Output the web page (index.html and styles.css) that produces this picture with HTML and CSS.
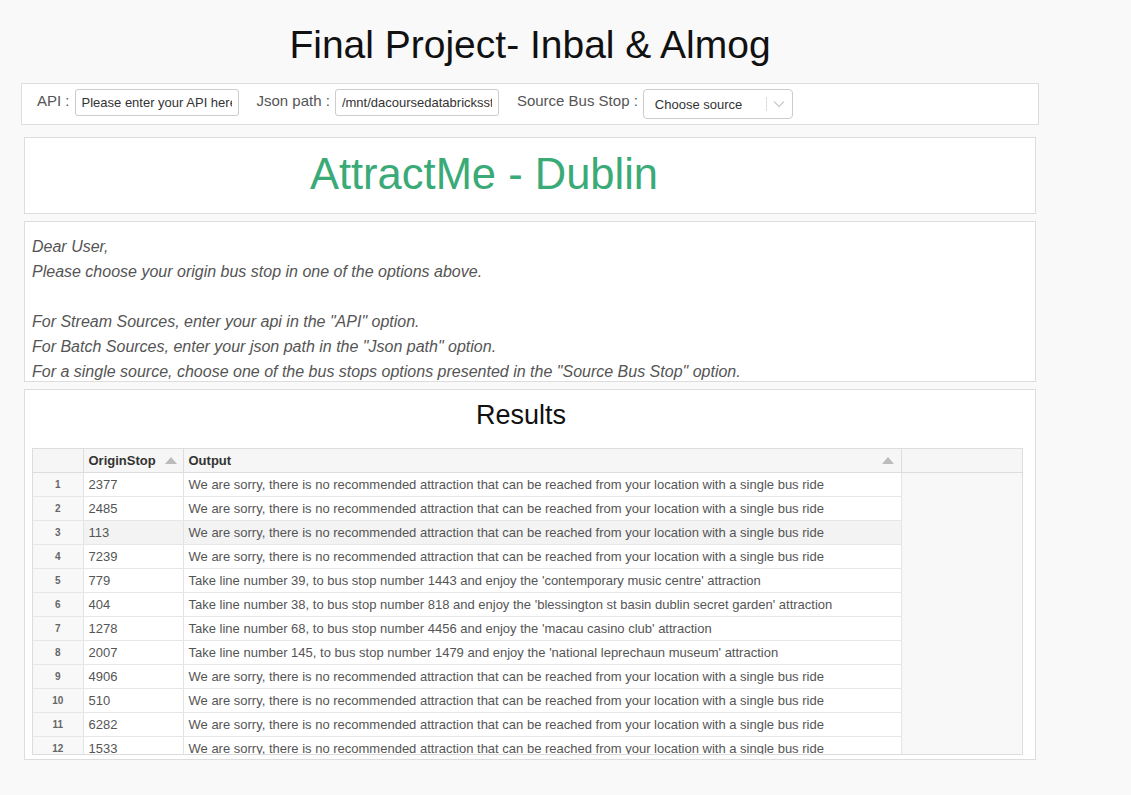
FILE: index.html
```html
<!DOCTYPE html>
<html>
<head>
<meta charset="utf-8">
<link rel="stylesheet" href="styles.css">
</head>
<body>
<div class="page">
  <h1 class="title">Final Project- Inbal &amp; Almog</h1>
  <div class="toolbar">
    <label class="field"><span class="lbl">API :</span><input class="txt" type="text" value="Please enter your API here"></label>
    <label class="field"><span class="lbl">Json path :</span><input class="txt" type="text" value="/mnt/dacoursedatabricksstorage/"></label>
    <div class="field"><span class="lbl">Source Bus Stop :</span>
      <div class="select">
        <span class="sel-text">Choose source</span>
        <span class="sel-sep"></span>
        <svg class="sel-arrow" width="12" height="8" viewBox="0 0 12 8"><path d="M1 1.5 L6 6.5 L11 1.5" fill="none" stroke="#ccc" stroke-width="1.3"/></svg>
      </div>
    </div>
  </div>
  <div class="panel brand"><div class="brand-text">AttractMe - Dublin</div></div>
  <div class="panel message">
    <p>Dear User,</p>
    <p>Please choose your origin bus stop in one of the options above.</p>
    <p>&nbsp;</p>
    <p>For Stream Sources, enter your api in the "API" option.</p>
    <p>For Batch Sources, enter your json path in the "Json path" option.</p>
    <p>For a single source, choose one of the bus stops options presented in the "Source Bus Stop" option.</p>
  </div>
  <div class="panel results">
    <h2 class="results-title">Results</h2>
    <div class="grid-wrap">
      <table class="grid">
        <thead>
          <tr>
            <th class="c-num"></th>
            <th class="c-stop"><span>OriginStop</span><span class="tri"></span></th>
            <th class="c-out"><span>Output</span><span class="tri"></span></th>
            <th class="c-fill"></th>
          </tr>
        </thead>
        <tbody>
          <tr><td class="c-num">1</td><td class="c-stop">2377</td><td class="c-out">We are sorry, there is no recommended attraction that can be reached from your location with a single bus ride</td><td class="c-fill"></td></tr>
          <tr><td class="c-num">2</td><td class="c-stop">2485</td><td class="c-out">We are sorry, there is no recommended attraction that can be reached from your location with a single bus ride</td><td class="c-fill"></td></tr>
          <tr class="hover"><td class="c-num">3</td><td class="c-stop">113</td><td class="c-out">We are sorry, there is no recommended attraction that can be reached from your location with a single bus ride</td><td class="c-fill"></td></tr>
          <tr><td class="c-num">4</td><td class="c-stop">7239</td><td class="c-out">We are sorry, there is no recommended attraction that can be reached from your location with a single bus ride</td><td class="c-fill"></td></tr>
          <tr><td class="c-num">5</td><td class="c-stop">779</td><td class="c-out">Take line number 39, to bus stop number 1443 and enjoy the 'contemporary music centre' attraction</td><td class="c-fill"></td></tr>
          <tr><td class="c-num">6</td><td class="c-stop">404</td><td class="c-out">Take line number 38, to bus stop number 818 and enjoy the 'blessington st basin dublin secret garden' attraction</td><td class="c-fill"></td></tr>
          <tr><td class="c-num">7</td><td class="c-stop">1278</td><td class="c-out">Take line number 68, to bus stop number 4456 and enjoy the 'macau casino club' attraction</td><td class="c-fill"></td></tr>
          <tr><td class="c-num">8</td><td class="c-stop">2007</td><td class="c-out">Take line number 145, to bus stop number 1479 and enjoy the 'national leprechaun museum' attraction</td><td class="c-fill"></td></tr>
          <tr><td class="c-num">9</td><td class="c-stop">4906</td><td class="c-out">We are sorry, there is no recommended attraction that can be reached from your location with a single bus ride</td><td class="c-fill"></td></tr>
          <tr><td class="c-num">10</td><td class="c-stop">510</td><td class="c-out">We are sorry, there is no recommended attraction that can be reached from your location with a single bus ride</td><td class="c-fill"></td></tr>
          <tr><td class="c-num">11</td><td class="c-stop">6282</td><td class="c-out">We are sorry, there is no recommended attraction that can be reached from your location with a single bus ride</td><td class="c-fill"></td></tr>
          <tr><td class="c-num">12</td><td class="c-stop">1533</td><td class="c-out">We are sorry, there is no recommended attraction that can be reached from your location with a single bus ride</td><td class="c-fill"></td></tr>
        </tbody>
      </table>
    </div>
  </div>
</div>
</body>
</html>
```

FILE: styles.css
```css
* { box-sizing: border-box; }
html, body { margin: 0; padding: 0; }
body {
  background: #f9f9f9;
  font-family: "Liberation Sans", Arial, sans-serif;
  color: #333;
}
.page {
  width: 1018px;
  margin-left: 21px;
  padding-top: 21px;
}
.title {
  margin: 0;
  height: 50px;
  line-height: 48px;
  font-size: 39px;
  font-weight: normal;
  color: #111;
  text-align: center;
}
.toolbar {
  margin-top: 12px;
  height: 42px;
  background: #fff;
  border: 1px solid #ddd;
  display: flex;
  align-items: flex-start;
  padding: 5px 0 0 15px;
  gap: 18px;
}
.field {
  display: flex;
  align-items: flex-start;
  gap: 5px;
}
.lbl {
  font-size: 15px;
  color: #555;
  line-height: 17px;
  padding-top: 3px;
}
.txt {
  width: 164px;
  height: 27px;
  border: 1px solid #ccc;
  border-radius: 3px;
  padding: 0 6px;
  font-family: "Liberation Sans", Arial, sans-serif;
  font-size: 13px;
  color: #333;
  background: #fff;
  margin: 0;
  outline: none;
}
.select {
  width: 150px;
  height: 30px;
  border: 1px solid #ccc;
  border-radius: 4px;
  background: #fff;
  display: flex;
  align-items: center;
  padding-left: 11px;
}
.sel-text {
  font-size: 13px;
  color: #333;
  width: 111px;
}
.sel-sep {
  width: 1px;
  height: 14px;
  background: #ddd;
}
.sel-arrow { margin-left: 6px; }
.panel {
  margin: 0 3px;
  background: #fff;
  border: 1px solid #ddd;
}
.brand {
  margin-top: 12px;
  height: 77px;
  display: flex;
  align-items: center;
  justify-content: center;
  padding-right: 92px;
}
.brand-text {
  font-size: 43.5px;
  color: #3aaa77;
  line-height: 1;
  padding-bottom: 2px;
}
.message {
  margin-top: 7px;
  height: 161px;
  overflow: hidden;
  padding: 12px 0 0 7px;
}
.message p {
  margin: 0;
  font-size: 16px;
  line-height: 25px;
  font-style: italic;
  color: #555;
}
.results {
  margin-top: 7px;
  height: 371px;
  padding: 0 12px 0 7px;
}
.results-title {
  margin: 0;
  height: 58px;
  line-height: 50px;
  font-size: 27px;
  font-weight: normal;
  color: #111;
  text-align: center;
  padding-right: 13px;
}
.grid-wrap {
  height: 307px;
  overflow: hidden;
  border: 1px solid #ddd;
  background: #f8f8f8;
}
.grid {
  border-collapse: collapse;
  table-layout: fixed;
  width: 990px;
  font-size: 13px;
}
.grid th, .grid td {
  height: 24px;
  padding: 0 5px;
  white-space: nowrap;
  overflow: hidden;
  text-align: left;
}
.grid th {
  background: #f6f6f6;
  border-right: 1px solid #ddd;
  border-bottom: 1px solid #ddd;
  font-weight: bold;
  color: #333;
  height: 23px;
}
.grid th span { vertical-align: middle; }
.grid td {
  background: #fff;
  border-right: 1px solid #e4e4e4;
  border-bottom: 1px solid #e6e6e6;
  color: #555;
}
.grid .c-num { width: 50px; }
.grid .c-stop { width: 100px; }
.grid .c-out { width: 718px; }
.grid th.c-fill { border-right: none; }
.grid td.c-num {
  background: #f8f8f8;
  font-size: 10px;
  font-weight: bold;
  color: #666;
  text-align: center;
}
.grid th.c-stop, .grid th.c-out { position: relative; }
.tri {
  position: absolute;
  top: 8px;
  width: 0;
  height: 0;
  border-left: 6px solid transparent;
  border-right: 6px solid transparent;
  border-bottom: 7px solid #bbb;
}
.c-stop .tri { right: 6px; }
.c-out .tri { right: 7px; }
.grid td.c-fill {
  background: #f8f8f8;
  border: none;
}
.grid tr.hover td.c-stop, .grid tr.hover td.c-out { background: #f3f3f3; }
```
